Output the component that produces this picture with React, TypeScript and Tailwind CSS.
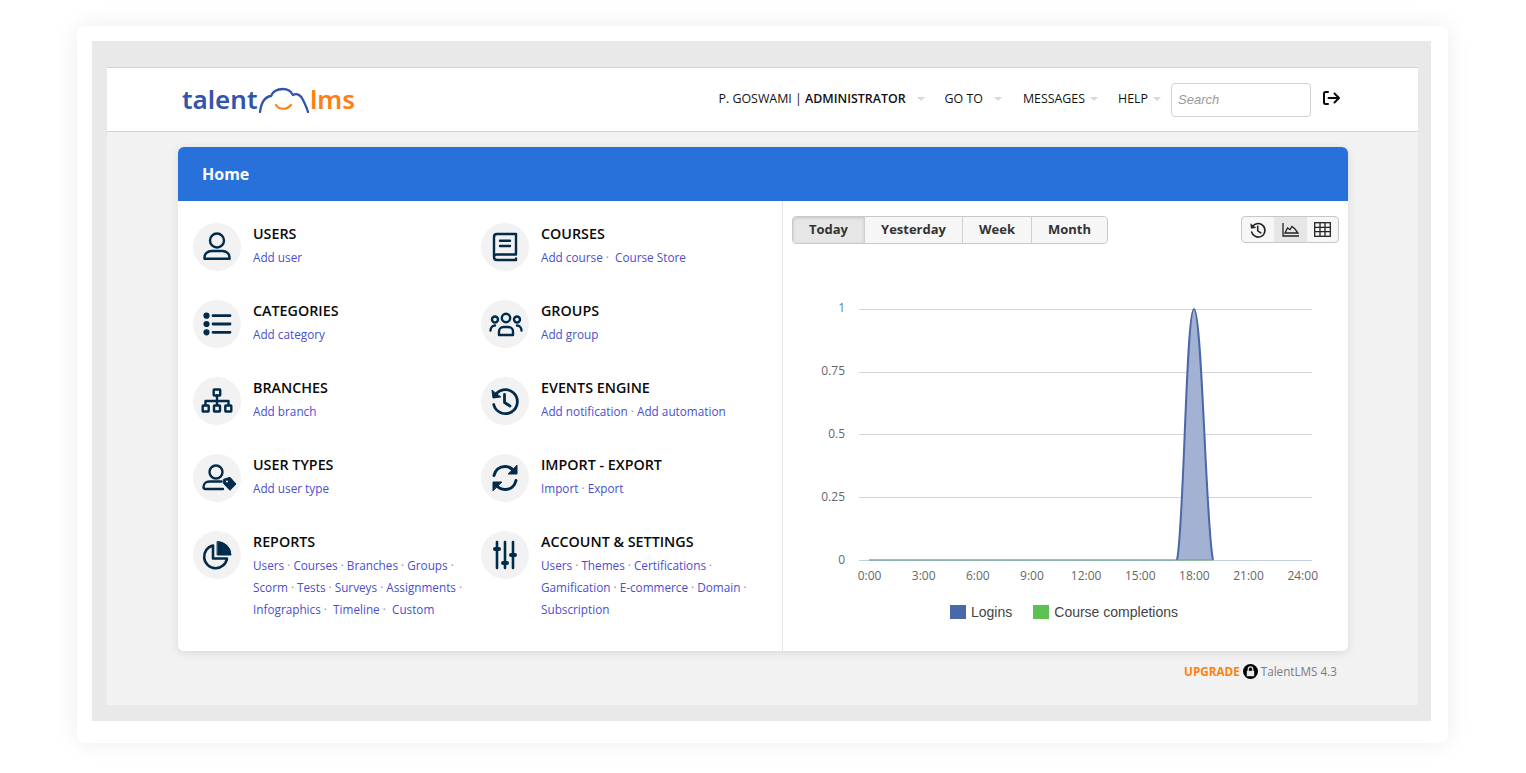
import type { ReactNode } from 'react'

const Svg = ({ children, size = 32 }: { children: ReactNode; size?: number }) => (
  <svg
    width={size}
    height={size}
    viewBox="0 0 32 32"
    fill="none"
    stroke="currentColor"
    strokeWidth="2.4"
    strokeLinecap="round"
    strokeLinejoin="round"
    className="overflow-visible"
  >
    {children}
  </svg>
)

const icons: Record<string, ReactNode> = {
  user: (
    <Svg>
      <circle cx="16" cy="9.500" r="7" />
      <path d="M3.500 27.800v-1.300c0-3.500 3-6.500 7-6.500h11c4 0 7 3 7 6.500v1.300z" />
    </Svg>
  ),
  list: (
    <Svg>
      <path d="M12 7.700h17M12 16h17M12 24.300h17" strokeWidth="2.800" />
      <circle cx="5.500" cy="7.700" r="1.900" fill="currentColor" />
      <circle cx="5.500" cy="16" r="1.900" fill="currentColor" />
      <circle cx="5.500" cy="24.300" r="1.900" fill="currentColor" />
    </Svg>
  ),
  branch: (
    <Svg>
      <g transform="translate(0 1.500)">
        <rect x="12.700" y="3" width="6.500" height="6" rx="0.500" />
        <path d="M16 9v9M4.500 18v-3.500h23V18" />
        <rect x="1.700" y="19" width="6" height="6" rx="0.500" />
        <rect x="13" y="19" width="6" height="6" rx="0.500" />
        <rect x="24.300" y="19" width="6" height="6" rx="0.500" />
      </g>
    </Svg>
  ),
  userTag: (
    <Svg>
      <circle cx="15" cy="10" r="6.500" />
      <path d="M22 27H5c-1.500 0-2.500-.8-2.500-2 0-3 2.500-5.500 6-5.500h12" />
      <path d="M22.700 17.300l6.300-2 6 6.700-6 6.300-6.300-6.600z" fill="currentColor" strokeWidth="1" />
      <circle cx="26" cy="19.500" r="1" fill="#f2f2f2" stroke="none" />
    </Svg>
  ),
  pie: (
    <Svg>
      <path d="M12 6.500A11.500 11.500 0 1 0 26 19.500H12z" strokeWidth="2.600" />
      <path d="M16.500 2.500A13.500 13.500 0 0 1 30 16H16.500z" fill="currentColor" strokeWidth="1" />
    </Svg>
  ),
  book: (
    <Svg>
      <path d="M5 25.500V6c0-1.700 1.300-3 3-3h19v20.500H8c-1.700 0-3 .8-3 2.500s1.300 3 3 3h19v-1.500" />
      <path d="M11 9.700h10M11 15h10" />
    </Svg>
  ),
  group: (
    <Svg>
      <g transform="translate(1 1.500)">
        <circle cx="16" cy="8.500" r="4.200" />
        <circle cx="5" cy="10" r="3" />
        <circle cx="27" cy="10" r="3" />
        <path d="M9 25.500V22c0-2.500 2-4.500 4.500-4.500h5c2.500 0 4.500 2 4.500 4.500v3.500z" />
        <path d="M0.500 21c0-2.800 2-5 4.500-5M31.500 21c0-2.800-2-5-4.500-5" />
      </g>
    </Svg>
  ),
  history: (
    <Svg>
      <path d="M5.500 11.500a12 12 0 1 1-.8 8" strokeWidth="2.800" />
      <path d="M3 5.500l1 7.500 7.500-1z" fill="currentColor" strokeWidth="1" />
      <path d="M15.500 9.500v8l5.500 3.500" strokeWidth="2.800" />
    </Svg>
  ),
  sync: (
    <Svg>
      <path d="M5 13.500C6.200 8 10.500 4.500 16 4.500c4 0 7 2 9 5" strokeWidth="3" />
      <path d="M27 18.500c-1.200 5.500-5.500 9-11 9-4 0-7-2-9-5" strokeWidth="3" />
      <path d="M28 3.500V12h-8.500z" fill="currentColor" strokeWidth="1" />
      <path d="M4 28.500V20h8.500z" fill="currentColor" strokeWidth="1" />
    </Svg>
  ),
  sliders: (
    <Svg>
      <path d="M8 3v26M16 3v26M24 3v26" strokeWidth="2.600" />
      <path d="M6 10h4M14 24h4M22 16h4" strokeWidth="4" />
    </Svg>
  ),
}

type Link = { label: string }

const links = (...labels: string[]): Link[] => labels.map((label) => ({ label }))

const left = [
  { icon: 'user', title: 'USERS', lines: [links('Add user')] },
  { icon: 'list', title: 'CATEGORIES', lines: [links('Add category')] },
  { icon: 'branch', title: 'BRANCHES', lines: [links('Add branch')] },
  { icon: 'userTag', title: 'USER TYPES', lines: [links('Add user type')] },
  {
    icon: 'pie',
    title: 'REPORTS',
    lines: [
      links('Users', 'Courses', 'Branches', 'Groups', ''),
      links('Scorm', 'Tests', 'Surveys', 'Assignments', ''),
      links('Infographics', ' Timeline', ' Custom'),
    ],
  },
]

const right = [
  { icon: 'book', title: 'COURSES', lines: [links('Add course', ' Course Store')] },
  { icon: 'group', title: 'GROUPS', lines: [links('Add group')] },
  { icon: 'history', title: 'EVENTS ENGINE', lines: [links('Add notification', 'Add automation')] },
  { icon: 'sync', title: 'IMPORT - EXPORT', lines: [links('Import', 'Export')] },
  {
    icon: 'sliders',
    title: 'ACCOUNT & SETTINGS',
    lines: [
      links('Users', 'Themes', 'Certifications', ''),
      links('Gamification', 'E-commerce', 'Domain', ''),
      links('Subscription'),
    ],
  },
]

function Row({ icon, title, lines }: { icon: string; title: string; lines: Link[][] }) {
  return (
    <div className="flex h-[77px] gap-3">
      <div className="flex h-12 w-12 shrink-0 items-center justify-center rounded-full bg-[#f2f2f2] text-[#012b4a]">
        {icons[icon]}
      </div>
      <div className="min-w-0">
        <h3 className="h-[22px] text-[14.3px] leading-[22px] font-semibold text-[#0a0a0a]">{title}</h3>
        <div className="mt-[1px] text-[11.75px] leading-[22px] whitespace-pre text-[#4a4fcf]">
          {lines.map((line, i) => (
            <div key={i}>
              {line.map((l, j) => (
                <span key={j}>
                  {l.label}
                  {j < line.length - 1 && <span className="text-[#8a8a8a]"> · </span>}
                </span>
              ))}
            </div>
          ))}
        </div>
      </div>
    </div>
  )
}

function Caret({ className }: { className: string }) {
  return (
    <span
      className={`mb-[2px] h-0 w-0 border-x-[4px] border-t-[4px] border-x-transparent border-t-[#d8d8d8] ${className}`}
    />
  )
}

const ticks = ['0:00', '3:00', '6:00', '9:00', '12:00', '15:00', '18:00', '21:00', '24:00']
const levels = [
  { y: 309, label: '1' },
  { y: 372, label: '0.75' },
  { y: 434, label: '0.5' },
  { y: 497, label: '0.25' },
]

function Chart() {
  // svg is placed at x=783, y=290 of the page
  const ox = 783
  const oy = 290
  const peak = `M${1177 - ox} ${560 - oy} C${1184 - ox} 240 ${1186 - ox} ${309 - oy} ${1194 - ox} ${309 - oy} C${1202 - ox} ${309 - oy} ${1206 - ox} 240 ${1213 - ox} ${560 - oy}`
  return (
    <svg width="565" height="300" viewBox="0 0 565 300" className="block">
      {levels.map((l) => (
        <g key={l.label}>
          <line x1={76} x2={529} y1={l.y - oy + 0.5} y2={l.y - oy + 0.5} stroke="#d4d4d4" />
          <text
            x={62}
            y={l.y - oy + 3 + (l.y > 400 ? 1 : 0)}
            textAnchor="end"
            fontSize="12"
            fill={l.label === '1' ? '#5c7fa3' : '#666'}
            fontFamily="'Open Sans', sans-serif"
          >
            {l.label}
          </text>
        </g>
      ))}
      <line x1={76} x2={529} y1={270.5} y2={270.5} stroke="#c0d0e0" />
      <text x={62} y={274} textAnchor="end" fontSize="12" fill="#666" fontFamily="'Open Sans', sans-serif">
        0
      </text>
      <line x1={86} x2={394} y1={270} y2={270} stroke="#7fa8a0" strokeWidth="1.500" />
      <path d={peak + ' Z'} fill="#a3b1d3" />
      <path d={peak} fill="none" stroke="#4a67a9" strokeWidth="2" />
      <line x1={394} x2={430} y1={270} y2={270} stroke="#6fa36a" strokeWidth="1" />
      {ticks.map((t, i) => (
        <text
          key={t}
          x={86.5 + i * 54.15}
          y={290}
          textAnchor="middle"
          fontSize="12"
          fill="#666"
          fontFamily="'Open Sans', sans-serif"
        >
          {t}
        </text>
      ))}
    </svg>
  )
}

export default function App() {
  return (
    <div className="h-[773px] w-[1526px] overflow-hidden bg-white pt-[26px] pl-[77px] font-['Open_Sans',sans-serif]">
      <div className="h-[717px] w-[1371px] rounded-lg bg-white pt-[15px] pr-[17px] pb-[22px] pl-[15px] shadow-[0_0_24px_rgba(0,0,0,0.08)]">
        <div className="h-[680px] w-[1339px] bg-[#e9e9e9] px-[15px] pt-[26px] pb-[16px]">
          <div className="h-[638px] w-[1311px] bg-[#f2f2f2]">
            {/* top bar */}
            <header className="flex h-[65px] items-center border-y border-[#d0d4d4] bg-white pr-[78px] pl-[75px]">
              <div className="flex items-end text-[26px] leading-[30px] font-semibold">
                <span className="mb-[2px] w-[76px] font-['Noto_Sans',sans-serif] text-[#3354ab]">talent</span>
                <svg width="52" height="26" viewBox="0 0 52 26" fill="none" className="mb-[3px]">
                  <path
                    d="M2 25C3 17 6 10 13 9 15 4 20 2 25 2c4 0 8 2 10 6 4-2 8 0 10 5 2 4 4 8 5 12"
                    stroke="#3354ab"
                    strokeWidth="2.300"
                    strokeLinecap="round"
                    strokeLinejoin="round"
                  />
                  <path d="M18 18c3 5 11 5 15 0" stroke="#ff7f11" strokeWidth="2.200" strokeLinecap="round" />
                </svg>
                <span className="mb-[2px] font-['Noto_Sans',sans-serif] text-[#ff7f11]">lms</span>
              </div>
              <nav className="ml-auto flex items-center text-[12.4px] leading-[16px] text-[#111]">
                <span className="mb-[2px]">
                  P. GOSWAMI | <b className="font-semibold">ADMINISTRATOR</b>
                </span>
                <Caret className="mr-[20px] ml-[11px]" />
                <span className="mb-[2px]">GO TO</span>
                <Caret className="mr-[21px] ml-[11px]" />
                <span className="mb-[2px]">MESSAGES</span>
                <Caret className="mr-[20px] ml-[5px]" />
                <span className="mb-[2px]">HELP</span>
                <Caret className="mr-[10px] ml-[5px]" />
                <div className="mt-[1px] flex h-[34px] w-[140px] items-center rounded border border-[#cfd4d4] px-[6px] font-['Liberation_Sans',sans-serif] text-[13px] text-[#999] italic">
                  Search
                </div>
                <svg
                  width="18"
                  height="18"
                  viewBox="0 0 18 18"
                  fill="none"
                  stroke="#0a0a0a"
                  strokeWidth="2"
                  strokeLinecap="round"
                  strokeLinejoin="round"
                  className="mb-[3px] ml-[11px]"
                >
                  <path d="M6 3H3.500C2.500 3 2 3.500 2 4.500v9c0 1 .5 1.500 1.500 1.500H6M6.500 9h10M12.500 4.500L17 9l-4.500 4.500" />
                </svg>
              </nav>
            </header>

            {/* main card */}
            <main className="mx-[71px] mt-[15px] h-[504px] w-[1170px] rounded-md bg-white shadow-[0_2px_10px_rgba(0,0,0,0.1)]">
              <div className="flex h-[54px] items-center rounded-t-md bg-[#2871da] px-6 text-[16px] font-bold text-white">
                Home
              </div>
              <div className="flex h-[450px]">
                <div className="grid w-[605px] shrink-0 grid-cols-[288px_1fr] border-r border-[#e6e6e6] pt-[22px] pl-[15px]">
                  <div>
                    {left.map((r) => (
                      <Row key={r.title} {...r} />
                    ))}
                  </div>
                  <div>
                    {right.map((r) => (
                      <Row key={r.title} {...r} />
                    ))}
                  </div>
                </div>
                <div className="min-w-0 flex-1">
                  <div className="flex justify-between pt-[15px] pr-[9px] pl-[9px]">
                    <div className="flex h-[28px] rounded border border-[#c8c8c8] text-[13px] font-bold text-[#333]">
                      <span className="flex w-[71px] items-center justify-center rounded-l bg-[#e6e6e6] shadow-[inset_0_1px_3px_rgba(0,0,0,0.15)]">
                        Today
                      </span>
                      <span className="flex w-[98px] items-center justify-center border-l border-[#d0d0d0] bg-[#f6f6f6]">
                        Yesterday
                      </span>
                      <span className="flex w-[69px] items-center justify-center border-l border-[#d0d0d0] bg-[#f6f6f6]">
                        Week
                      </span>
                      <span className="flex w-[76px] items-center justify-center rounded-r border-l border-[#d0d0d0] bg-[#f6f6f6]">
                        Month
                      </span>
                    </div>
                    <div className="flex h-[27px] rounded border border-[#c8c8c8] bg-[#f6f6f6] text-[#222]">
                      <span className="flex w-[32px] items-center justify-center">
                        <Svg size={18}>{icons.history}</Svg>
                      </span>
                      <span className="flex w-[33px] items-center justify-center bg-[#e6e6e6]">
                        <svg width="18" height="16" viewBox="0 0 18 16" fill="none" stroke="currentColor" strokeWidth="1.300">
                          <path d="M1 1v13h16M3 11l2.500-5 2.500 1.500L10 4.500 13 7l3 4z" />
                        </svg>
                      </span>
                      <span className="flex w-[31px] items-center justify-center">
                        <svg width="17" height="15" viewBox="0 0 17 15" fill="none" stroke="currentColor" strokeWidth="1.300">
                          <rect x="0.700" y="0.700" width="15.600" height="13.600" />
                          <path d="M6 1v13M11 1v13M1 5.300h15M1 9.700h15" />
                        </svg>
                      </span>
                    </div>
                  </div>
                  <div className="mt-[46px]">
                    <Chart />
                  </div>
                  <div className="mt-[14px] ml-[167px] flex items-center font-['Liberation_Sans',sans-serif] text-[14px] leading-[16px] text-[#444]">
                    <span className="mr-[5px] h-[14px] w-[16px] bg-[#4a67a9]" />
                    <span>Logins</span>
                    <span className="mr-[5px] ml-[21px] h-[14px] w-[16px] bg-[#5cc152]" />
                    <span>Course completions</span>
                  </div>
                </div>
              </div>
            </main>

            {/* footer */}
            <div className="mx-[71px] mt-[12px] flex items-center justify-end pr-[10px] text-[11.7px] leading-[16px] text-[#7a7a85]">
              <b className="font-bold text-[#ff7f11]">UPGRADE</b>
              <span className="mx-[3px] flex h-[15px] w-[15px] items-center justify-center rounded-full bg-black">
                <svg width="9" height="11" viewBox="0 0 9 11" fill="none">
                  <path d="M2.200 5V3.200a2.300 2.300 0 0 1 4.600 0V5" stroke="#e8e8e8" strokeWidth="1.200" />
                  <rect x="0.800" y="4.800" width="7.400" height="5.400" fill="#e8e8e8" />
                </svg>
              </span>
              <span>TalentLMS 4.3</span>
            </div>
          </div>
        </div>
      </div>
    </div>
  )
}
